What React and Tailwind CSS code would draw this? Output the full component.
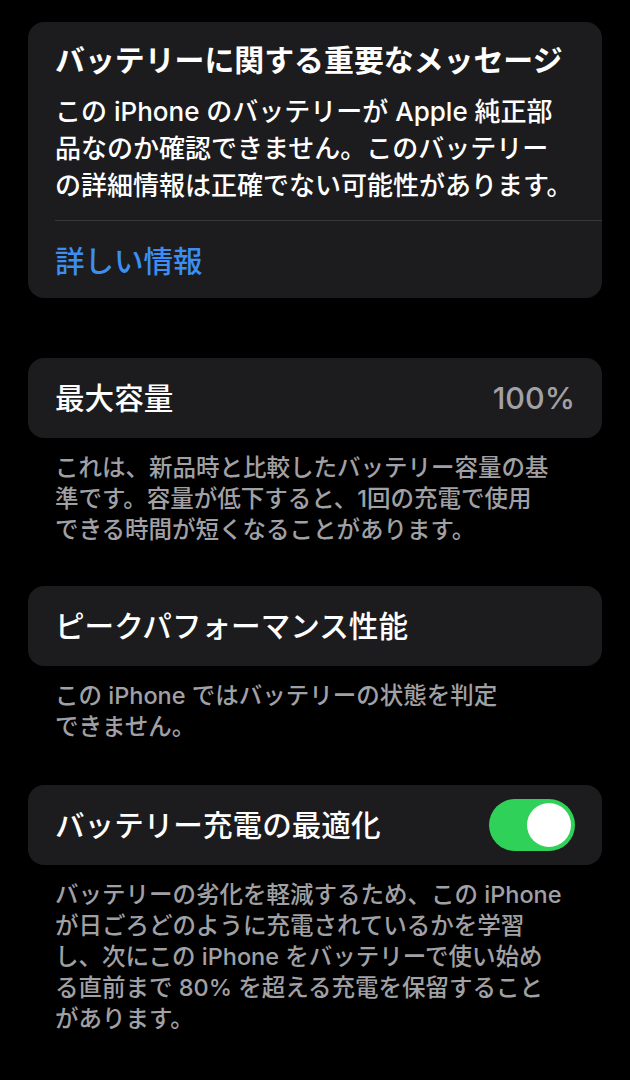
import React from 'react';

const font = { fontFamily: 'Inter, "Noto Sans CJK JP", sans-serif' };

function Footnote({ lines }) {
  return (
    <div className="mt-[14px] px-[27px] text-[23.5px] leading-[31px] text-[#a0a0a5] font-medium">
      {lines.map((l, i) => (
        <div key={i}>{l}</div>
      ))}
    </div>
  );
}

function Row({ label, children }) {
  return (
    <div className="h-[80px] rounded-[16px] bg-[#1c1c1e] flex items-center justify-between pl-[27px] pr-[27px]">
      <span className="text-[29.6px] font-medium text-white">{label}</span>
      {children}
    </div>
  );
}

function Toggle() {
  return (
    <div className="w-[86px] h-[52px] rounded-full bg-[#30d158] flex items-center justify-end pr-[4px]">
      <div className="w-[44px] h-[44px] rounded-full bg-white" />
    </div>
  );
}

export default function App() {
  return (
    <div className="min-h-[1080px] bg-black px-[28px] pt-[22px]" style={font}>
      {/* message card */}
      <div className="rounded-[16px] bg-[#1c1c1e] pt-[20px] pb-[19px]">
        <div className="px-[27px]">
          <h1 className="text-[29.9px] leading-[36px] font-bold text-white">
            バッテリーに関する重要なメッセージ
          </h1>
          <div className="mt-[15px] text-[26px] leading-[37px] font-medium text-white">
            <div>この iPhone のバッテリーが Apple 純正部</div>
            <div>品なのか確認できません。このバッテリー</div>
            <div>の詳細情報は正確でない可能性があります。</div>
          </div>
        </div>
        <div className="ml-[27px] mt-[16px] h-px bg-[#38383a]" />
        <div className="mt-[22px] px-[27px] text-[29.5px] leading-[36px] font-medium text-[#3c8ff2]">
          詳しい情報
        </div>
      </div>

      <div className="mt-[60px]">
        <Row label="最大容量">
          <span className="text-[30.5px] font-medium text-[#a1a1a6]">100%</span>
        </Row>
        <Footnote
          lines={[
            'これは、新品時と比較したバッテリー容量の基',
            '準です。容量が低下すると、1回の充電で使用',
            'できる時間が短くなることがあります。',
          ]}
        />
      </div>

      <div className="mt-[41px]">
        <Row label="ピークパフォーマンス性能" />
        <Footnote lines={['この iPhone ではバッテリーの状態を判定', 'できません。']} />
      </div>

      <div className="mt-[43px]">
        <Row label="バッテリー充電の最適化">
          <Toggle />
        </Row>
        <Footnote
          lines={[
            'バッテリーの劣化を軽減するため、この iPhone',
            'が日ごろどのように充電されているかを学習',
            'し、次にこの iPhone をバッテリーで使い始め',
            'る直前まで 80% を超える充電を保留すること',
            'があります。',
          ]}
        />
      </div>
    </div>
  );
}
